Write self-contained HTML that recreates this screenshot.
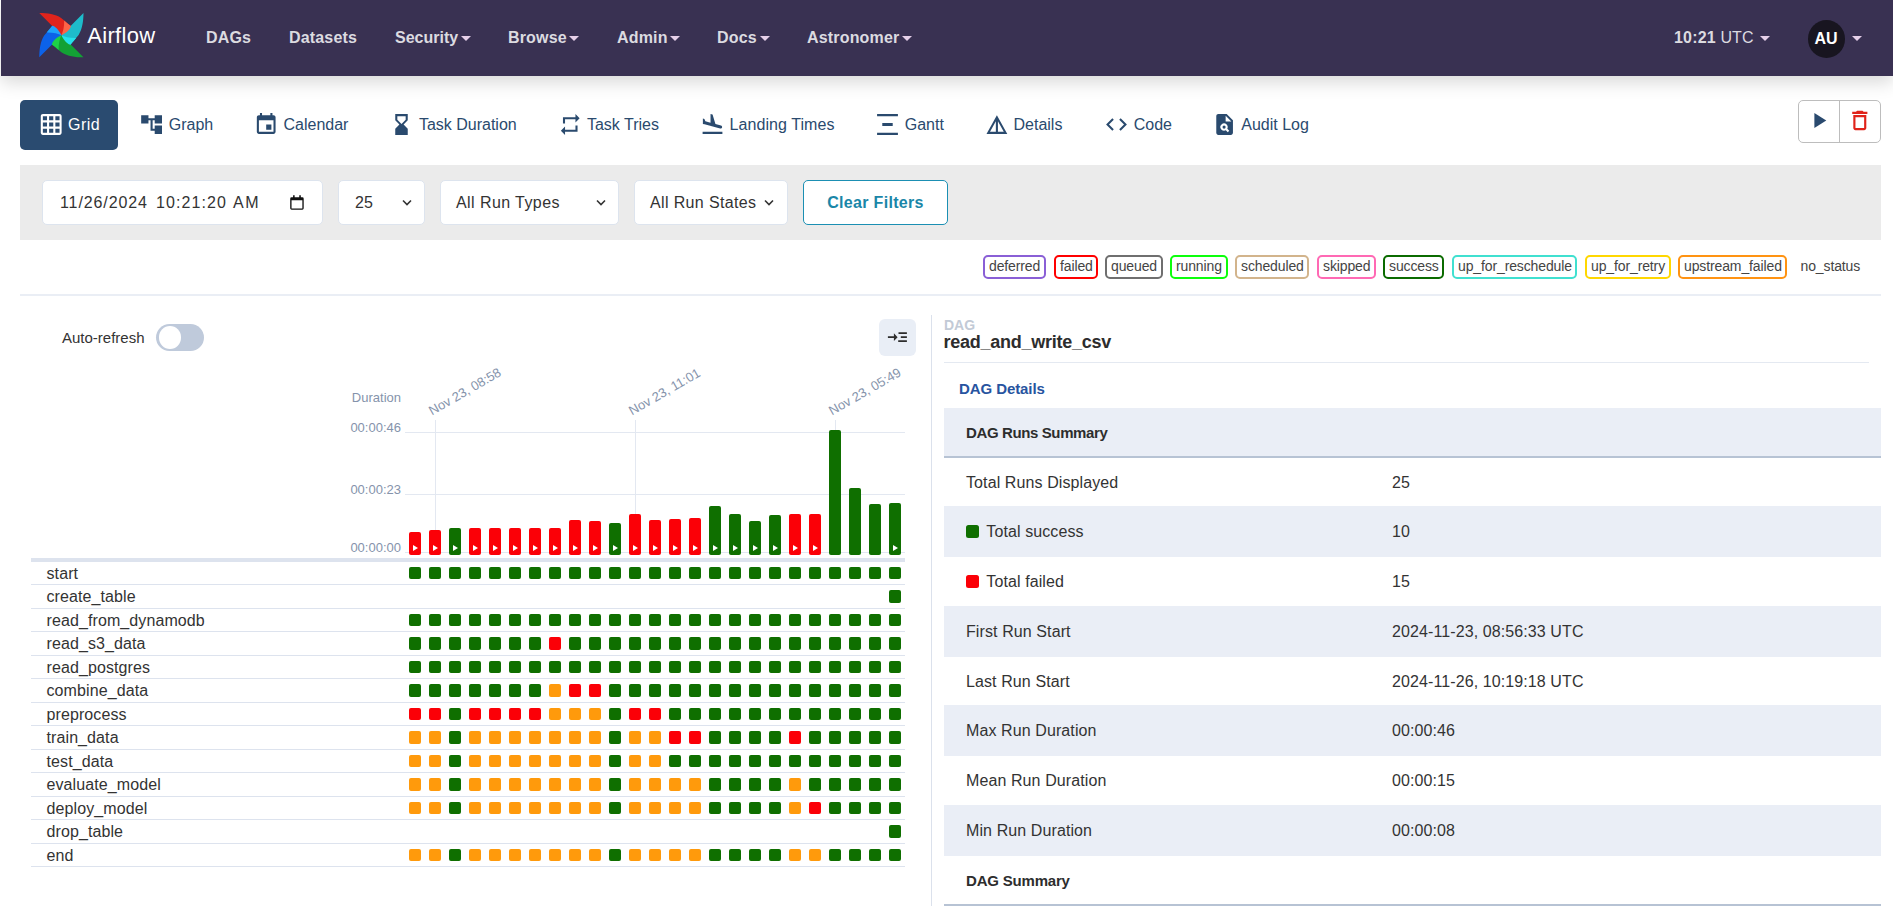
<!DOCTYPE html>
<html lang="en"><head><meta charset="utf-8"><title>read_and_write_csv - Grid - Airflow</title>
<style>
*{box-sizing:border-box;margin:0;padding:0}
html,body{width:1893px;height:912px;overflow:hidden;background:#fff}
body{font-family:"Liberation Sans",sans-serif;font-size:16px;color:#333;position:relative;letter-spacing:.1px}
.abs{position:absolute}
#nav{position:absolute;left:1px;top:0;width:1892px;height:76px;background:#393152;box-shadow:0 7px 16px rgba(0,0,0,.145)}
#nav .it{position:absolute;top:28px;line-height:20px;font-weight:bold;font-size:16px;color:#dcdbe0;white-space:nowrap;letter-spacing:.17px}
#nav .car{position:absolute;top:36px;width:0;height:0;border-left:5px solid transparent;border-right:5px solid transparent;border-top:5px solid #e6d0e9}
#brand{position:absolute;left:86.3px;top:22.4px;font-size:22px;line-height:28px;color:#fff;letter-spacing:.3px;font-weight:normal}
#avatar{position:absolute;left:1807px;top:20px;width:37.4px;height:37.8px;border-radius:50%;background:#181520;color:#fff;font-weight:bold;font-size:16px;line-height:38px;text-align:center;letter-spacing:0;padding-right:1.3px}
.tab{position:absolute;top:100px;height:50px;line-height:50px;font-size:16px;white-space:nowrap;letter-spacing:0}
.ticon{position:absolute;top:112px}
#tab-grid{position:absolute;left:20px;top:100px;width:98px;height:50px;background:#2a4b70;border-radius:5px}
#runbtns{position:absolute;left:1798px;top:100px;width:83px;height:43px;border:1px solid #bdbdbd;border-radius:5px;background:#fff}
#runbtns .sep{position:absolute;left:40px;top:0;width:1px;height:41px;background:#bdbdbd}
#filters{position:absolute;left:20px;top:165px;width:1861px;height:75px;background:#ebebeb}
.inp{position:absolute;top:15px;height:45px;background:#fff;border:1px solid #dde4ee;border-radius:5px;font-size:16px;line-height:44px;color:#333;padding-left:15px;white-space:nowrap;letter-spacing:0}
#clear{position:absolute;left:783px;top:15px;width:145px;height:45px;border:1px solid #1b8fb3;border-radius:5px;background:#fff;color:#1a86a8;font-weight:bold;text-align:center;line-height:43px;font-size:16px;letter-spacing:.31px}
.badge{position:absolute;top:255px;height:24px;border:2px solid #000;border-radius:5px;font-size:14px;line-height:18px;color:#444;padding:0 4px;white-space:nowrap;letter-spacing:-.12px;background:#fff}
#hr1{position:absolute;left:20px;top:294px;width:1861px;height:2px;background:#eaeef5}
#vdiv{position:absolute;left:931px;top:315px;width:1px;height:591px;background:#dbe1ec}
#auto{position:absolute;left:62px;top:328px;font-size:15px;line-height:20px;color:#333;letter-spacing:0}
#toggle{position:absolute;left:156px;top:324px;width:48px;height:27px;border-radius:14px;background:#bfcadb}
#toggle i{position:absolute;left:2.7px;top:2.4px;width:22px;height:22.3px;border-radius:50%;background:#fff}
#collapse{position:absolute;left:879px;top:319px;width:37px;height:37px;border-radius:6px;background:#e9eef6}
/* chart */
.ylab{position:absolute;left:300px;width:101px;text-align:right;font-size:13px;line-height:16px;color:#8593ab;letter-spacing:0}
.hline{position:absolute;left:405px;width:500px;height:1px;background:#e3e8f1}
.vtick{position:absolute;width:1px;background:#e3e8f1}
.xlab{position:absolute;font-size:13px;line-height:16px;color:#8593ab;white-space:nowrap;transform-origin:0 100%;transform:rotate(-30deg);letter-spacing:0}
.bar{position:absolute;width:12px;border-radius:2px}
.bar i{position:absolute;left:4px;bottom:4px;width:0;height:0;border-top:3px solid transparent;border-bottom:3px solid transparent;border-left:5px solid #fff}
.thick{position:absolute;left:31px;top:558px;width:874px;height:4px;background:#dde3ee}
.tname{position:absolute;left:46.5px;font-size:16px;line-height:20px;color:#333;white-space:nowrap}
.sq{position:absolute;width:12px;height:12px;border-radius:2px}
.rline{position:absolute;left:31px;width:874px;height:1px;background:#dde3ee}
/* right */
#r-dag{position:absolute;left:944px;top:315.75px;font-size:14px;line-height:18px;font-weight:bold;color:#c2cad6;letter-spacing:0}
#r-title{position:absolute;left:943.5px;top:331px;font-size:18px;line-height:22px;font-weight:bold;color:#2d2d2d;letter-spacing:-.25px}
#r-hr{position:absolute;left:944px;top:362px;width:925px;height:1px;background:#e4e9f1}
#r-tab{position:absolute;left:959px;top:380px;font-size:15px;line-height:18px;font-weight:bold;color:#2754a0;letter-spacing:-.08px}
.dt{position:absolute;top:0;letter-spacing:.74px}
.stripe{position:absolute;left:944px;width:937px;background:#eaeef6}
.hb{position:absolute;left:944px;width:937px;height:2px;background:#b7c3d4}
.rt{position:absolute;font-size:16px;line-height:20px;color:#333;white-space:nowrap}
.rt.h{font-weight:bold;font-size:15px;color:#2d2d2d;letter-spacing:-.38px}
.rsq{position:absolute;left:966px;width:13px;height:13px;border-radius:2.5px}

</style></head><body>
<div id="nav">
<svg class="abs" style="left:36px;top:11px" width="48" height="48" viewBox="-24.4 -24.2 48 48"><path transform="rotate(0)" d="M-22.1-22.1C-14-22-6-21-.3-17.2C3-14.500 6.500-11.200 9.500-9.200L0 0Z" fill="#e0241c"/><path transform="rotate(90)" d="M-22.1-22.1C-14-22-6-21-.3-17.2C3-14.500 6.500-11.200 9.500-9.200L0 0Z" fill="#1ebccb"/><path transform="rotate(180)" d="M-22.1-22.1C-14-22-6-21-.3-17.2C3-14.500 6.500-11.200 9.500-9.200L0 0Z" fill="#13a135"/><path transform="rotate(270)" d="M-22.1-22.1C-14-22-6-21-.3-17.2C3-14.500 6.500-11.200 9.500-9.200L0 0Z" fill="#0c62e9"/><path transform="rotate(0)" d="M2.800-14.700C5-13 7.500-10.500 9.500-9.200C9.300-6.500 5.500-2.500 0 0C1.500-3 2.900-8 2.800-14.700Z" fill="#fd6448"/><path transform="rotate(90)" d="M2.800-14.700C5-13 7.500-10.500 9.500-9.200C9.300-6.500 5.500-2.500 0 0C1.500-3 2.900-8 2.800-14.700Z" fill="#25e2eb"/><path transform="rotate(180)" d="M2.800-14.700C5-13 7.500-10.500 9.500-9.200C9.300-6.500 5.500-2.500 0 0C1.500-3 2.900-8 2.800-14.700Z" fill="#1ed248"/><path transform="rotate(270)" d="M2.800-14.700C5-13 7.500-10.500 9.500-9.200C9.300-6.500 5.500-2.500 0 0C1.500-3 2.900-8 2.800-14.700Z" fill="#1ea3fc"/></svg>
<div id="brand">Airflow</div>
<div class="it" style="left:205px">DAGs</div>
<div class="it" style="left:288px">Datasets</div>
<div class="it" style="left:394px;letter-spacing:0">Security</div>
<div class="it" style="left:507px">Browse</div>
<div class="it" style="left:616px">Admin</div>
<div class="it" style="left:716px">Docs</div>
<div class="it" style="left:806px">Astronomer</div>
<div class="it" style="left:1673px">10:21 <span style="font-weight:normal">UTC</span></div>
<div id="avatar">AU</div>
<i class="car" style="left:460px"></i><i class="car" style="left:568px"></i><i class="car" style="left:669px"></i><i class="car" style="left:759px"></i><i class="car" style="left:901px"></i><i class="car" style="left:1759px"></i><i class="car" style="left:1851px"></i>
</div>

<div id="tab-grid"></div>
<svg class="ticon" style="left:38px" width="25" height="25" viewBox="-0.67 0 24 24" fill="#fff"><path d="M20 2H4c-1.1 0-2 .9-2 2v16c0 1.1.9 2 2 2h16c1.1 0 2-.9 2-2V4c0-1.1-.9-2-2-2zM8 20H4v-4h4v4zm0-6H4v-4h4v4zm0-6H4V4h4v4zm6 12h-4v-4h4v4zm0-6h-4v-4h4v4zm0-6h-4V4h4v4zm6 12h-4v-4h4v4zm0-6h-4v-4h4v4zm0-6h-4V4h4v4z"/></svg><div class="tab" style="left:68.0px;color:#fff;letter-spacing:.5px">Grid</div>
<svg class="ticon" style="left:139px" width="25" height="25" viewBox="-0.08 0 24 24" fill="#2a4a6e"><path d="M22 11V3h-7v3H9V3H2v8h7V8h2v10h4v3h7v-8h-7v3h-2V8h2v3z"/></svg><div class="tab" style="left:168.8px;color:#2a4a6e">Graph</div>
<svg class="ticon" style="left:253px" width="25" height="25" viewBox="-0.67 0 24 24" fill="#2a4a6e"><path d="M17 12h-5v5h5v-5zM16 1v2H8V1H6v2H5c-1.11 0-1.99.9-1.99 2L3 19c0 1.1.89 2 2 2h14c1.1 0 2-.9 2-2V5c0-1.1-.9-2-2-2h-1V1h-2zm3 18H5V8h14v11z"/></svg><div class="tab" style="left:283.5px;color:#2a4a6e">Calendar</div>
<svg class="ticon" style="left:389px" width="25" height="25" viewBox="-0.00 0 24 24" fill="#2a4a6e"><path d="M18 22l-.01-6L14 12l3.990-4.010L18 2H6v6l4 4-4 3.990V22h12zM8 7.500V4h8v3.500l-4 4-4-4z"/></svg><div class="tab" style="left:418.9px;color:#2a4a6e">Task Duration</div>
<svg class="ticon" style="left:557px" width="25" height="25" viewBox="-0.72 0 24 24" fill="#2a4a6e"><path d="M7 7h10v3l4-4-4-4v3H5v6h2V7zm10 10H7v-3l-4 4 4 4v-3h12v-6h-2v4z"/></svg><div class="tab" style="left:586.9px;color:#2a4a6e">Task Tries</div>
<svg class="ticon" style="left:700px" width="25" height="25" viewBox="-0.00 0 24 24" fill="#2a4a6e"><path d="M2.500 19h19v2h-19zm7.180-5.730l4.350 1.160 5.310 1.420c.8.210 1.620-.260 1.840-1.060.210-.8-.260-1.620-1.060-1.840l-5.310-1.420-2.760-9.020L10.120 2v8.280L5.150 8.950l-.930-2.320-1.450-.390v5.170l1.600.430 5.310 1.430z"/></svg><div class="tab" style="left:729.6px;color:#2a4a6e;letter-spacing:.06px">Landing Times</div>
<svg class="ticon" style="left:875px" width="25" height="25" viewBox="-0.00 0 24 24" fill="#2a4a6e"><path d="M22 2v2H2V2h20zM7 10.500v3h10v-3H7zM2 20v2h20v-2H2z"/></svg><div class="tab" style="left:904.7px;color:#2a4a6e">Gantt</div>
<svg class="ticon" style="left:984px" width="25" height="25" viewBox="-0.38 0 24 24" fill="#2a4a6e"><path d="M12 3L2 21h20L12 3zm1 5.920L18.600 19H13V8.920zm-2 0V19H5.400L11 8.920z"/></svg><div class="tab" style="left:1013.5px;color:#2a4a6e">Details</div>
<svg class="ticon" style="left:1104px" width="25" height="25" viewBox="-0.00 0 24 24" fill="#2a4a6e"><path d="M9.400 16.600L4.800 12l4.600-4.600L8 6l-6 6 6 6 1.400-1.400zm5.200 0l4.600-4.600-4.600-4.600L16 6l6 6-6 6-1.400-1.400z"/></svg><div class="tab" style="left:1133.7px;color:#2a4a6e">Code</div>
<svg class="ticon" style="left:1212px" width="25" height="25" viewBox="-0.10 0 24 24" fill="#2a4a6e"><path d="M14 2H6c-1.100 0-2 .900-2 2v16c0 1.100.890 2 1.990 2H18c1.100 0 2-.900 2-2V8l-6-6zm1.040 17.450l-1.880-1.880c-1.330.710-3.010.530-4.130-.590a3.495 3.495 0 0 1 0-4.950 3.495 3.495 0 0 1 4.950 0c1.120 1.120 1.310 2.800.590 4.130l1.880 1.880-1.410 1.410zM13 9V3.500L18.500 9H13z"/><circle cx="11.500" cy="14.500" r="1.500"/></svg><div class="tab" style="left:1241.3px;color:#2a4a6e">Audit Log</div>

<div id="runbtns"><div class="sep"></div></div>
<svg class="abs" style="left:1805px;top:107px" width="26" height="26" viewBox="-0.65 -0.46 24 24" fill="#2a4a6e"><path d="M8 5v14l11-7z"/></svg>
<svg class="abs" style="left:1846px;top:107px" width="26" height="26" viewBox="-0.74 -0.46 24 24" fill="#e0231a"><path d="M16 9v10H8V9h8m-1.500-6h-5l-1 1H5v2h14V4h-3.500l-1-1zM18 7H6v12c0 1.100.900 2 2 2h8c1.100 0 2-.900 2-2V7z"/></svg>

<div id="filters">
<div class="inp" style="left:22px;width:281px;padding-left:0"><span class="dt" style="left:17px;letter-spacing:.9px">11/26/2024</span><span class="dt" style="left:113px;letter-spacing:1.1px">10:21:20</span><span class="dt" style="left:190px;letter-spacing:1.6px">AM</span><svg class="abs" style="left:247px;top:14px" width="14" height="15" viewBox="-0.2 -0.3 14.5 15.5"><path fill="#111" d="M3 0h1.600v2h4.800V0h1.600v2h1.500A1.500 1.500 0 0 1 14 3.500v10A1.500 1.500 0 0 1 12.500 15h-11A1.500 1.500 0 0 1 0 13.500v-10A1.500 1.500 0 0 1 1.500 2H3zM1.400 5.200v8.400h11.200V5.200z"/></svg></div>
<div class="inp" style="left:318px;width:87px;padding-left:16px">25<svg class="abs" style="left:63px;top:18px" width="10" height="8" viewBox="0 0 10 8"><path fill="none" stroke="#333" stroke-width="1.600" d="M1 1.500l4 4 4-4"/></svg></div>
<div class="inp" style="left:420px;width:179px;padding-left:15px;letter-spacing:.42px">All Run Types<svg class="abs" style="left:155px;top:18px" width="10" height="8" viewBox="0 0 10 8"><path fill="none" stroke="#333" stroke-width="1.600" d="M1 1.500l4 4 4-4"/></svg></div>
<div class="inp" style="left:614px;width:154px;letter-spacing:.36px">All Run States<svg class="abs" style="left:129px;top:18px" width="10" height="8" viewBox="0 0 10 8"><path fill="none" stroke="#333" stroke-width="1.600" d="M1 1.500l4 4 4-4"/></svg></div>
<div id="clear">Clear Filters</div>
</div>

<div class="badge" style="left:983px;width:63px;border-color:#8a5fd6">deferred</div>
<div class="badge" style="left:1054px;width:44px;border-color:#ff0000">failed</div>
<div class="badge" style="left:1105px;width:58px;border-color:#6f6f6f">queued</div>
<div class="badge" style="left:1170px;width:58px;border-color:#0cff0c">running</div>
<div class="badge" style="left:1235px;width:74px;border-color:#d2b48c">scheduled</div>
<div class="badge" style="left:1317px;width:59px;border-color:#ff69b4">skipped</div>
<div class="badge" style="left:1383px;width:61px;border-color:#0b6b00">success</div>
<div class="badge" style="left:1452px;width:125px;border-color:#40e0d0">up_for_reschedule</div>
<div class="badge" style="left:1585px;width:86px;border-color:#ffd700">up_for_retry</div>
<div class="badge" style="left:1678px;width:109px;border-color:#ff9312">upstream_failed</div>
<div class="badge" style="left:1794.5px;border-color:transparent">no_status</div>
<div id="hr1"></div>
<div id="vdiv"></div>
<div id="auto">Auto-refresh</div>
<div id="toggle"><i></i></div>
<div id="collapse"></div><svg class="abs" style="left:886px;top:330px" width="24" height="14" viewBox="886 330 24 14"><path fill="#2d2d2d" d="M887.900 336.250h6v-3l3.700 3.900-3.700 3.900v-3h-6zM898.500 332.300h8.400v1.700h-8.400zM900.800 336.300h6.100v1.700h-6.100zM898.200 340.250h8.700v1.700h-8.700z"/></svg>
<div id="chart">
<div class="ylab" style="top:390px">Duration</div>
<div class="ylab" style="top:420px">00:00:46</div>
<div class="ylab" style="top:482px">00:00:23</div>
<div class="ylab" style="top:540px">00:00:00</div>
<div class="hline" style="top:432px"></div>
<div class="hline" style="top:494px"></div>
<div class="hline" style="top:552px"></div>
<div class="vtick" style="left:435px;top:420px;height:110px"></div>
<div class="xlab" style="left:433.5px;top:402.7px">Nov 23, 08:58</div>
<div class="vtick" style="left:635px;top:420px;height:94px"></div>
<div class="xlab" style="left:633.5px;top:402.7px">Nov 23, 11:01</div>
<div class="vtick" style="left:835px;top:420px;height:10px"></div>
<div class="xlab" style="left:833.5px;top:402.7px">Nov 23, 05:49</div>
<div class="bar" style="left:409px;top:532px;height:23px;background:#fb0007"><i></i></div>
<div class="bar" style="left:429px;top:530px;height:25px;background:#fb0007"><i></i></div>
<div class="bar" style="left:449px;top:528px;height:27px;background:#0f6f00"><i></i></div>
<div class="bar" style="left:469px;top:528px;height:27px;background:#fb0007"><i></i></div>
<div class="bar" style="left:489px;top:528px;height:27px;background:#fb0007"><i></i></div>
<div class="bar" style="left:509px;top:528px;height:27px;background:#fb0007"><i></i></div>
<div class="bar" style="left:529px;top:528px;height:27px;background:#fb0007"><i></i></div>
<div class="bar" style="left:549px;top:528px;height:27px;background:#fb0007"><i></i></div>
<div class="bar" style="left:569px;top:520px;height:35px;background:#fb0007"><i></i></div>
<div class="bar" style="left:589px;top:521px;height:34px;background:#fb0007"><i></i></div>
<div class="bar" style="left:609px;top:523px;height:32px;background:#0f6f00"><i></i></div>
<div class="bar" style="left:629px;top:514px;height:41px;background:#fb0007"><i></i></div>
<div class="bar" style="left:649px;top:520px;height:35px;background:#fb0007"><i></i></div>
<div class="bar" style="left:669px;top:519px;height:36px;background:#fb0007"><i></i></div>
<div class="bar" style="left:689px;top:518px;height:37px;background:#fb0007"><i></i></div>
<div class="bar" style="left:709px;top:506px;height:49px;background:#0f6f00"><i></i></div>
<div class="bar" style="left:729px;top:514px;height:41px;background:#0f6f00"><i></i></div>
<div class="bar" style="left:749px;top:521px;height:34px;background:#0f6f00"><i></i></div>
<div class="bar" style="left:769px;top:515px;height:40px;background:#0f6f00"><i></i></div>
<div class="bar" style="left:789px;top:514px;height:41px;background:#fb0007"><i></i></div>
<div class="bar" style="left:809px;top:514px;height:41px;background:#fb0007"><i></i></div>
<div class="bar" style="left:829px;top:430px;height:125px;background:#0f6f00"></div>
<div class="bar" style="left:849px;top:488px;height:67px;background:#0f6f00"></div>
<div class="bar" style="left:869px;top:504px;height:51px;background:#0f6f00"></div>
<div class="bar" style="left:889px;top:503px;height:52px;background:#0f6f00"><i></i></div>
<div class="thick"></div>
<div class="tname" style="top:564px">start</div>
<div class="rline" style="top:584px"></div>
<div class="tname" style="top:587px">create_table</div>
<div class="rline" style="top:608px"></div>
<div class="tname" style="top:611px">read_from_dynamodb</div>
<div class="rline" style="top:631px"></div>
<div class="tname" style="top:634px">read_s3_data</div>
<div class="rline" style="top:655px"></div>
<div class="tname" style="top:658px">read_postgres</div>
<div class="rline" style="top:678px"></div>
<div class="tname" style="top:681px">combine_data</div>
<div class="rline" style="top:702px"></div>
<div class="tname" style="top:705px">preprocess</div>
<div class="rline" style="top:725px"></div>
<div class="tname" style="top:728px">train_data</div>
<div class="rline" style="top:749px"></div>
<div class="tname" style="top:752px">test_data</div>
<div class="rline" style="top:772px"></div>
<div class="tname" style="top:775px">evaluate_model</div>
<div class="rline" style="top:796px"></div>
<div class="tname" style="top:799px">deploy_model</div>
<div class="rline" style="top:819px"></div>
<div class="tname" style="top:822px">drop_table</div>
<div class="rline" style="top:843px"></div>
<div class="tname" style="top:846px">end</div>
<div class="rline" style="top:866px"></div>
<svg class="abs" style="left:409px;top:567px" width="492" height="300" viewBox="0 0 492 300"><rect x="0" y="0" width="12" height="12" rx="2" fill="#0f6f00"/><rect x="20" y="0" width="12" height="12" rx="2" fill="#0f6f00"/><rect x="40" y="0" width="12" height="12" rx="2" fill="#0f6f00"/><rect x="60" y="0" width="12" height="12" rx="2" fill="#0f6f00"/><rect x="80" y="0" width="12" height="12" rx="2" fill="#0f6f00"/><rect x="100" y="0" width="12" height="12" rx="2" fill="#0f6f00"/><rect x="120" y="0" width="12" height="12" rx="2" fill="#0f6f00"/><rect x="140" y="0" width="12" height="12" rx="2" fill="#0f6f00"/><rect x="160" y="0" width="12" height="12" rx="2" fill="#0f6f00"/><rect x="180" y="0" width="12" height="12" rx="2" fill="#0f6f00"/><rect x="200" y="0" width="12" height="12" rx="2" fill="#0f6f00"/><rect x="220" y="0" width="12" height="12" rx="2" fill="#0f6f00"/><rect x="240" y="0" width="12" height="12" rx="2" fill="#0f6f00"/><rect x="260" y="0" width="12" height="12" rx="2" fill="#0f6f00"/><rect x="280" y="0" width="12" height="12" rx="2" fill="#0f6f00"/><rect x="300" y="0" width="12" height="12" rx="2" fill="#0f6f00"/><rect x="320" y="0" width="12" height="12" rx="2" fill="#0f6f00"/><rect x="340" y="0" width="12" height="12" rx="2" fill="#0f6f00"/><rect x="360" y="0" width="12" height="12" rx="2" fill="#0f6f00"/><rect x="380" y="0" width="12" height="12" rx="2" fill="#0f6f00"/><rect x="400" y="0" width="12" height="12" rx="2" fill="#0f6f00"/><rect x="420" y="0" width="12" height="12" rx="2" fill="#0f6f00"/><rect x="440" y="0" width="12" height="12" rx="2" fill="#0f6f00"/><rect x="460" y="0" width="12" height="12" rx="2" fill="#0f6f00"/><rect x="480" y="0" width="12" height="12" rx="2" fill="#0f6f00"/><rect x="480" y="23" width="12" height="13" rx="2" fill="#0f6f00"/><rect x="0" y="47" width="12" height="12" rx="2" fill="#0f6f00"/><rect x="20" y="47" width="12" height="12" rx="2" fill="#0f6f00"/><rect x="40" y="47" width="12" height="12" rx="2" fill="#0f6f00"/><rect x="60" y="47" width="12" height="12" rx="2" fill="#0f6f00"/><rect x="80" y="47" width="12" height="12" rx="2" fill="#0f6f00"/><rect x="100" y="47" width="12" height="12" rx="2" fill="#0f6f00"/><rect x="120" y="47" width="12" height="12" rx="2" fill="#0f6f00"/><rect x="140" y="47" width="12" height="12" rx="2" fill="#0f6f00"/><rect x="160" y="47" width="12" height="12" rx="2" fill="#0f6f00"/><rect x="180" y="47" width="12" height="12" rx="2" fill="#0f6f00"/><rect x="200" y="47" width="12" height="12" rx="2" fill="#0f6f00"/><rect x="220" y="47" width="12" height="12" rx="2" fill="#0f6f00"/><rect x="240" y="47" width="12" height="12" rx="2" fill="#0f6f00"/><rect x="260" y="47" width="12" height="12" rx="2" fill="#0f6f00"/><rect x="280" y="47" width="12" height="12" rx="2" fill="#0f6f00"/><rect x="300" y="47" width="12" height="12" rx="2" fill="#0f6f00"/><rect x="320" y="47" width="12" height="12" rx="2" fill="#0f6f00"/><rect x="340" y="47" width="12" height="12" rx="2" fill="#0f6f00"/><rect x="360" y="47" width="12" height="12" rx="2" fill="#0f6f00"/><rect x="380" y="47" width="12" height="12" rx="2" fill="#0f6f00"/><rect x="400" y="47" width="12" height="12" rx="2" fill="#0f6f00"/><rect x="420" y="47" width="12" height="12" rx="2" fill="#0f6f00"/><rect x="440" y="47" width="12" height="12" rx="2" fill="#0f6f00"/><rect x="460" y="47" width="12" height="12" rx="2" fill="#0f6f00"/><rect x="480" y="47" width="12" height="12" rx="2" fill="#0f6f00"/><rect x="0" y="70" width="12" height="13" rx="2" fill="#0f6f00"/><rect x="20" y="70" width="12" height="13" rx="2" fill="#0f6f00"/><rect x="40" y="70" width="12" height="13" rx="2" fill="#0f6f00"/><rect x="60" y="70" width="12" height="13" rx="2" fill="#0f6f00"/><rect x="80" y="70" width="12" height="13" rx="2" fill="#0f6f00"/><rect x="100" y="70" width="12" height="13" rx="2" fill="#0f6f00"/><rect x="120" y="70" width="12" height="13" rx="2" fill="#0f6f00"/><rect x="140" y="70" width="12" height="13" rx="2" fill="#fb0007"/><rect x="160" y="70" width="12" height="13" rx="2" fill="#0f6f00"/><rect x="180" y="70" width="12" height="13" rx="2" fill="#0f6f00"/><rect x="200" y="70" width="12" height="13" rx="2" fill="#0f6f00"/><rect x="220" y="70" width="12" height="13" rx="2" fill="#0f6f00"/><rect x="240" y="70" width="12" height="13" rx="2" fill="#0f6f00"/><rect x="260" y="70" width="12" height="13" rx="2" fill="#0f6f00"/><rect x="280" y="70" width="12" height="13" rx="2" fill="#0f6f00"/><rect x="300" y="70" width="12" height="13" rx="2" fill="#0f6f00"/><rect x="320" y="70" width="12" height="13" rx="2" fill="#0f6f00"/><rect x="340" y="70" width="12" height="13" rx="2" fill="#0f6f00"/><rect x="360" y="70" width="12" height="13" rx="2" fill="#0f6f00"/><rect x="380" y="70" width="12" height="13" rx="2" fill="#0f6f00"/><rect x="400" y="70" width="12" height="13" rx="2" fill="#0f6f00"/><rect x="420" y="70" width="12" height="13" rx="2" fill="#0f6f00"/><rect x="440" y="70" width="12" height="13" rx="2" fill="#0f6f00"/><rect x="460" y="70" width="12" height="13" rx="2" fill="#0f6f00"/><rect x="480" y="70" width="12" height="13" rx="2" fill="#0f6f00"/><rect x="0" y="94" width="12" height="12" rx="2" fill="#0f6f00"/><rect x="20" y="94" width="12" height="12" rx="2" fill="#0f6f00"/><rect x="40" y="94" width="12" height="12" rx="2" fill="#0f6f00"/><rect x="60" y="94" width="12" height="12" rx="2" fill="#0f6f00"/><rect x="80" y="94" width="12" height="12" rx="2" fill="#0f6f00"/><rect x="100" y="94" width="12" height="12" rx="2" fill="#0f6f00"/><rect x="120" y="94" width="12" height="12" rx="2" fill="#0f6f00"/><rect x="140" y="94" width="12" height="12" rx="2" fill="#0f6f00"/><rect x="160" y="94" width="12" height="12" rx="2" fill="#0f6f00"/><rect x="180" y="94" width="12" height="12" rx="2" fill="#0f6f00"/><rect x="200" y="94" width="12" height="12" rx="2" fill="#0f6f00"/><rect x="220" y="94" width="12" height="12" rx="2" fill="#0f6f00"/><rect x="240" y="94" width="12" height="12" rx="2" fill="#0f6f00"/><rect x="260" y="94" width="12" height="12" rx="2" fill="#0f6f00"/><rect x="280" y="94" width="12" height="12" rx="2" fill="#0f6f00"/><rect x="300" y="94" width="12" height="12" rx="2" fill="#0f6f00"/><rect x="320" y="94" width="12" height="12" rx="2" fill="#0f6f00"/><rect x="340" y="94" width="12" height="12" rx="2" fill="#0f6f00"/><rect x="360" y="94" width="12" height="12" rx="2" fill="#0f6f00"/><rect x="380" y="94" width="12" height="12" rx="2" fill="#0f6f00"/><rect x="400" y="94" width="12" height="12" rx="2" fill="#0f6f00"/><rect x="420" y="94" width="12" height="12" rx="2" fill="#0f6f00"/><rect x="440" y="94" width="12" height="12" rx="2" fill="#0f6f00"/><rect x="460" y="94" width="12" height="12" rx="2" fill="#0f6f00"/><rect x="480" y="94" width="12" height="12" rx="2" fill="#0f6f00"/><rect x="0" y="117" width="12" height="13" rx="2" fill="#0f6f00"/><rect x="20" y="117" width="12" height="13" rx="2" fill="#0f6f00"/><rect x="40" y="117" width="12" height="13" rx="2" fill="#0f6f00"/><rect x="60" y="117" width="12" height="13" rx="2" fill="#0f6f00"/><rect x="80" y="117" width="12" height="13" rx="2" fill="#0f6f00"/><rect x="100" y="117" width="12" height="13" rx="2" fill="#0f6f00"/><rect x="120" y="117" width="12" height="13" rx="2" fill="#0f6f00"/><rect x="140" y="117" width="12" height="13" rx="2" fill="#ff9a0c"/><rect x="160" y="117" width="12" height="13" rx="2" fill="#fb0007"/><rect x="180" y="117" width="12" height="13" rx="2" fill="#fb0007"/><rect x="200" y="117" width="12" height="13" rx="2" fill="#0f6f00"/><rect x="220" y="117" width="12" height="13" rx="2" fill="#0f6f00"/><rect x="240" y="117" width="12" height="13" rx="2" fill="#0f6f00"/><rect x="260" y="117" width="12" height="13" rx="2" fill="#0f6f00"/><rect x="280" y="117" width="12" height="13" rx="2" fill="#0f6f00"/><rect x="300" y="117" width="12" height="13" rx="2" fill="#0f6f00"/><rect x="320" y="117" width="12" height="13" rx="2" fill="#0f6f00"/><rect x="340" y="117" width="12" height="13" rx="2" fill="#0f6f00"/><rect x="360" y="117" width="12" height="13" rx="2" fill="#0f6f00"/><rect x="380" y="117" width="12" height="13" rx="2" fill="#0f6f00"/><rect x="400" y="117" width="12" height="13" rx="2" fill="#0f6f00"/><rect x="420" y="117" width="12" height="13" rx="2" fill="#0f6f00"/><rect x="440" y="117" width="12" height="13" rx="2" fill="#0f6f00"/><rect x="460" y="117" width="12" height="13" rx="2" fill="#0f6f00"/><rect x="480" y="117" width="12" height="13" rx="2" fill="#0f6f00"/><rect x="0" y="141" width="12" height="12" rx="2" fill="#fb0007"/><rect x="20" y="141" width="12" height="12" rx="2" fill="#fb0007"/><rect x="40" y="141" width="12" height="12" rx="2" fill="#0f6f00"/><rect x="60" y="141" width="12" height="12" rx="2" fill="#fb0007"/><rect x="80" y="141" width="12" height="12" rx="2" fill="#fb0007"/><rect x="100" y="141" width="12" height="12" rx="2" fill="#fb0007"/><rect x="120" y="141" width="12" height="12" rx="2" fill="#fb0007"/><rect x="140" y="141" width="12" height="12" rx="2" fill="#ff9a0c"/><rect x="160" y="141" width="12" height="12" rx="2" fill="#ff9a0c"/><rect x="180" y="141" width="12" height="12" rx="2" fill="#ff9a0c"/><rect x="200" y="141" width="12" height="12" rx="2" fill="#0f6f00"/><rect x="220" y="141" width="12" height="12" rx="2" fill="#fb0007"/><rect x="240" y="141" width="12" height="12" rx="2" fill="#fb0007"/><rect x="260" y="141" width="12" height="12" rx="2" fill="#0f6f00"/><rect x="280" y="141" width="12" height="12" rx="2" fill="#0f6f00"/><rect x="300" y="141" width="12" height="12" rx="2" fill="#0f6f00"/><rect x="320" y="141" width="12" height="12" rx="2" fill="#0f6f00"/><rect x="340" y="141" width="12" height="12" rx="2" fill="#0f6f00"/><rect x="360" y="141" width="12" height="12" rx="2" fill="#0f6f00"/><rect x="380" y="141" width="12" height="12" rx="2" fill="#0f6f00"/><rect x="400" y="141" width="12" height="12" rx="2" fill="#0f6f00"/><rect x="420" y="141" width="12" height="12" rx="2" fill="#0f6f00"/><rect x="440" y="141" width="12" height="12" rx="2" fill="#0f6f00"/><rect x="460" y="141" width="12" height="12" rx="2" fill="#0f6f00"/><rect x="480" y="141" width="12" height="12" rx="2" fill="#0f6f00"/><rect x="0" y="164" width="12" height="13" rx="2" fill="#ff9a0c"/><rect x="20" y="164" width="12" height="13" rx="2" fill="#ff9a0c"/><rect x="40" y="164" width="12" height="13" rx="2" fill="#0f6f00"/><rect x="60" y="164" width="12" height="13" rx="2" fill="#ff9a0c"/><rect x="80" y="164" width="12" height="13" rx="2" fill="#ff9a0c"/><rect x="100" y="164" width="12" height="13" rx="2" fill="#ff9a0c"/><rect x="120" y="164" width="12" height="13" rx="2" fill="#ff9a0c"/><rect x="140" y="164" width="12" height="13" rx="2" fill="#ff9a0c"/><rect x="160" y="164" width="12" height="13" rx="2" fill="#ff9a0c"/><rect x="180" y="164" width="12" height="13" rx="2" fill="#ff9a0c"/><rect x="200" y="164" width="12" height="13" rx="2" fill="#0f6f00"/><rect x="220" y="164" width="12" height="13" rx="2" fill="#ff9a0c"/><rect x="240" y="164" width="12" height="13" rx="2" fill="#ff9a0c"/><rect x="260" y="164" width="12" height="13" rx="2" fill="#fb0007"/><rect x="280" y="164" width="12" height="13" rx="2" fill="#fb0007"/><rect x="300" y="164" width="12" height="13" rx="2" fill="#0f6f00"/><rect x="320" y="164" width="12" height="13" rx="2" fill="#0f6f00"/><rect x="340" y="164" width="12" height="13" rx="2" fill="#0f6f00"/><rect x="360" y="164" width="12" height="13" rx="2" fill="#0f6f00"/><rect x="380" y="164" width="12" height="13" rx="2" fill="#fb0007"/><rect x="400" y="164" width="12" height="13" rx="2" fill="#0f6f00"/><rect x="420" y="164" width="12" height="13" rx="2" fill="#0f6f00"/><rect x="440" y="164" width="12" height="13" rx="2" fill="#0f6f00"/><rect x="460" y="164" width="12" height="13" rx="2" fill="#0f6f00"/><rect x="480" y="164" width="12" height="13" rx="2" fill="#0f6f00"/><rect x="0" y="188" width="12" height="12" rx="2" fill="#ff9a0c"/><rect x="20" y="188" width="12" height="12" rx="2" fill="#ff9a0c"/><rect x="40" y="188" width="12" height="12" rx="2" fill="#0f6f00"/><rect x="60" y="188" width="12" height="12" rx="2" fill="#ff9a0c"/><rect x="80" y="188" width="12" height="12" rx="2" fill="#ff9a0c"/><rect x="100" y="188" width="12" height="12" rx="2" fill="#ff9a0c"/><rect x="120" y="188" width="12" height="12" rx="2" fill="#ff9a0c"/><rect x="140" y="188" width="12" height="12" rx="2" fill="#ff9a0c"/><rect x="160" y="188" width="12" height="12" rx="2" fill="#ff9a0c"/><rect x="180" y="188" width="12" height="12" rx="2" fill="#ff9a0c"/><rect x="200" y="188" width="12" height="12" rx="2" fill="#0f6f00"/><rect x="220" y="188" width="12" height="12" rx="2" fill="#ff9a0c"/><rect x="240" y="188" width="12" height="12" rx="2" fill="#ff9a0c"/><rect x="260" y="188" width="12" height="12" rx="2" fill="#0f6f00"/><rect x="280" y="188" width="12" height="12" rx="2" fill="#0f6f00"/><rect x="300" y="188" width="12" height="12" rx="2" fill="#0f6f00"/><rect x="320" y="188" width="12" height="12" rx="2" fill="#0f6f00"/><rect x="340" y="188" width="12" height="12" rx="2" fill="#0f6f00"/><rect x="360" y="188" width="12" height="12" rx="2" fill="#0f6f00"/><rect x="380" y="188" width="12" height="12" rx="2" fill="#0f6f00"/><rect x="400" y="188" width="12" height="12" rx="2" fill="#0f6f00"/><rect x="420" y="188" width="12" height="12" rx="2" fill="#0f6f00"/><rect x="440" y="188" width="12" height="12" rx="2" fill="#0f6f00"/><rect x="460" y="188" width="12" height="12" rx="2" fill="#0f6f00"/><rect x="480" y="188" width="12" height="12" rx="2" fill="#0f6f00"/><rect x="0" y="211" width="12" height="13" rx="2" fill="#ff9a0c"/><rect x="20" y="211" width="12" height="13" rx="2" fill="#ff9a0c"/><rect x="40" y="211" width="12" height="13" rx="2" fill="#0f6f00"/><rect x="60" y="211" width="12" height="13" rx="2" fill="#ff9a0c"/><rect x="80" y="211" width="12" height="13" rx="2" fill="#ff9a0c"/><rect x="100" y="211" width="12" height="13" rx="2" fill="#ff9a0c"/><rect x="120" y="211" width="12" height="13" rx="2" fill="#ff9a0c"/><rect x="140" y="211" width="12" height="13" rx="2" fill="#ff9a0c"/><rect x="160" y="211" width="12" height="13" rx="2" fill="#ff9a0c"/><rect x="180" y="211" width="12" height="13" rx="2" fill="#ff9a0c"/><rect x="200" y="211" width="12" height="13" rx="2" fill="#0f6f00"/><rect x="220" y="211" width="12" height="13" rx="2" fill="#ff9a0c"/><rect x="240" y="211" width="12" height="13" rx="2" fill="#ff9a0c"/><rect x="260" y="211" width="12" height="13" rx="2" fill="#ff9a0c"/><rect x="280" y="211" width="12" height="13" rx="2" fill="#ff9a0c"/><rect x="300" y="211" width="12" height="13" rx="2" fill="#0f6f00"/><rect x="320" y="211" width="12" height="13" rx="2" fill="#0f6f00"/><rect x="340" y="211" width="12" height="13" rx="2" fill="#0f6f00"/><rect x="360" y="211" width="12" height="13" rx="2" fill="#0f6f00"/><rect x="380" y="211" width="12" height="13" rx="2" fill="#ff9a0c"/><rect x="400" y="211" width="12" height="13" rx="2" fill="#0f6f00"/><rect x="420" y="211" width="12" height="13" rx="2" fill="#0f6f00"/><rect x="440" y="211" width="12" height="13" rx="2" fill="#0f6f00"/><rect x="460" y="211" width="12" height="13" rx="2" fill="#0f6f00"/><rect x="480" y="211" width="12" height="13" rx="2" fill="#0f6f00"/><rect x="0" y="235" width="12" height="12" rx="2" fill="#ff9a0c"/><rect x="20" y="235" width="12" height="12" rx="2" fill="#ff9a0c"/><rect x="40" y="235" width="12" height="12" rx="2" fill="#0f6f00"/><rect x="60" y="235" width="12" height="12" rx="2" fill="#ff9a0c"/><rect x="80" y="235" width="12" height="12" rx="2" fill="#ff9a0c"/><rect x="100" y="235" width="12" height="12" rx="2" fill="#ff9a0c"/><rect x="120" y="235" width="12" height="12" rx="2" fill="#ff9a0c"/><rect x="140" y="235" width="12" height="12" rx="2" fill="#ff9a0c"/><rect x="160" y="235" width="12" height="12" rx="2" fill="#ff9a0c"/><rect x="180" y="235" width="12" height="12" rx="2" fill="#ff9a0c"/><rect x="200" y="235" width="12" height="12" rx="2" fill="#0f6f00"/><rect x="220" y="235" width="12" height="12" rx="2" fill="#ff9a0c"/><rect x="240" y="235" width="12" height="12" rx="2" fill="#ff9a0c"/><rect x="260" y="235" width="12" height="12" rx="2" fill="#ff9a0c"/><rect x="280" y="235" width="12" height="12" rx="2" fill="#ff9a0c"/><rect x="300" y="235" width="12" height="12" rx="2" fill="#0f6f00"/><rect x="320" y="235" width="12" height="12" rx="2" fill="#0f6f00"/><rect x="340" y="235" width="12" height="12" rx="2" fill="#0f6f00"/><rect x="360" y="235" width="12" height="12" rx="2" fill="#0f6f00"/><rect x="380" y="235" width="12" height="12" rx="2" fill="#ff9a0c"/><rect x="400" y="235" width="12" height="12" rx="2" fill="#fb0007"/><rect x="420" y="235" width="12" height="12" rx="2" fill="#0f6f00"/><rect x="440" y="235" width="12" height="12" rx="2" fill="#0f6f00"/><rect x="460" y="235" width="12" height="12" rx="2" fill="#0f6f00"/><rect x="480" y="235" width="12" height="12" rx="2" fill="#0f6f00"/><rect x="480" y="258" width="12" height="13" rx="2" fill="#0f6f00"/><rect x="0" y="282" width="12" height="12" rx="2" fill="#ff9a0c"/><rect x="20" y="282" width="12" height="12" rx="2" fill="#ff9a0c"/><rect x="40" y="282" width="12" height="12" rx="2" fill="#0f6f00"/><rect x="60" y="282" width="12" height="12" rx="2" fill="#ff9a0c"/><rect x="80" y="282" width="12" height="12" rx="2" fill="#ff9a0c"/><rect x="100" y="282" width="12" height="12" rx="2" fill="#ff9a0c"/><rect x="120" y="282" width="12" height="12" rx="2" fill="#ff9a0c"/><rect x="140" y="282" width="12" height="12" rx="2" fill="#ff9a0c"/><rect x="160" y="282" width="12" height="12" rx="2" fill="#ff9a0c"/><rect x="180" y="282" width="12" height="12" rx="2" fill="#ff9a0c"/><rect x="200" y="282" width="12" height="12" rx="2" fill="#0f6f00"/><rect x="220" y="282" width="12" height="12" rx="2" fill="#ff9a0c"/><rect x="240" y="282" width="12" height="12" rx="2" fill="#ff9a0c"/><rect x="260" y="282" width="12" height="12" rx="2" fill="#ff9a0c"/><rect x="280" y="282" width="12" height="12" rx="2" fill="#ff9a0c"/><rect x="300" y="282" width="12" height="12" rx="2" fill="#0f6f00"/><rect x="320" y="282" width="12" height="12" rx="2" fill="#0f6f00"/><rect x="340" y="282" width="12" height="12" rx="2" fill="#0f6f00"/><rect x="360" y="282" width="12" height="12" rx="2" fill="#0f6f00"/><rect x="380" y="282" width="12" height="12" rx="2" fill="#ff9a0c"/><rect x="400" y="282" width="12" height="12" rx="2" fill="#ff9a0c"/><rect x="420" y="282" width="12" height="12" rx="2" fill="#0f6f00"/><rect x="440" y="282" width="12" height="12" rx="2" fill="#0f6f00"/><rect x="460" y="282" width="12" height="12" rx="2" fill="#0f6f00"/><rect x="480" y="282" width="12" height="12" rx="2" fill="#0f6f00"/></svg>
</div><div id="r-dag">DAG</div>
<div id="r-title">read_and_write_csv</div>
<div id="r-hr"></div>
<div id="r-tab">DAG Details</div>
<div class="stripe" style="top:408px;height:48px"></div><div class="hb" style="top:456px"></div>
<div class="stripe" style="top:506px;height:51px"></div>
<div class="stripe" style="top:606px;height:51px"></div>
<div class="stripe" style="top:705px;height:51px"></div>
<div class="stripe" style="top:805px;height:51px"></div>
<div class="hb" style="top:904px"></div>
<div class="rt h" style="top:423px;left:966px">DAG Runs Summary</div>
<div class="rt" style="top:473px;left:966px">Total Runs Displayed</div>
<div class="rt" style="top:473px;left:1392px">25</div>
<div class="rsq" style="top:525px;background:#0f6f00"></div>
<div class="rt" style="top:522px;left:986.3px">Total success</div>
<div class="rt" style="top:522px;left:1392px">10</div>
<div class="rsq" style="top:575px;background:#fb0007"></div>
<div class="rt" style="top:572px;left:986.3px">Total failed</div>
<div class="rt" style="top:572px;left:1392px">15</div>
<div class="rt" style="top:622px;left:966px">First Run Start</div>
<div class="rt" style="top:622px;left:1392px">2024-11-23, 08:56:33 UTC</div>
<div class="rt" style="top:672px;left:966px">Last Run Start</div>
<div class="rt" style="top:672px;left:1392px">2024-11-26, 10:19:18 UTC</div>
<div class="rt" style="top:721px;left:966px">Max Run Duration</div>
<div class="rt" style="top:721px;left:1392px">00:00:46</div>
<div class="rt" style="top:771px;left:966px">Mean Run Duration</div>
<div class="rt" style="top:771px;left:1392px">00:00:15</div>
<div class="rt" style="top:821px;left:966px">Min Run Duration</div>
<div class="rt" style="top:821px;left:1392px">00:00:08</div>
<div class="rt h" style="top:871px;left:966px;letter-spacing:-.19px">DAG Summary</div>

</body></html>
